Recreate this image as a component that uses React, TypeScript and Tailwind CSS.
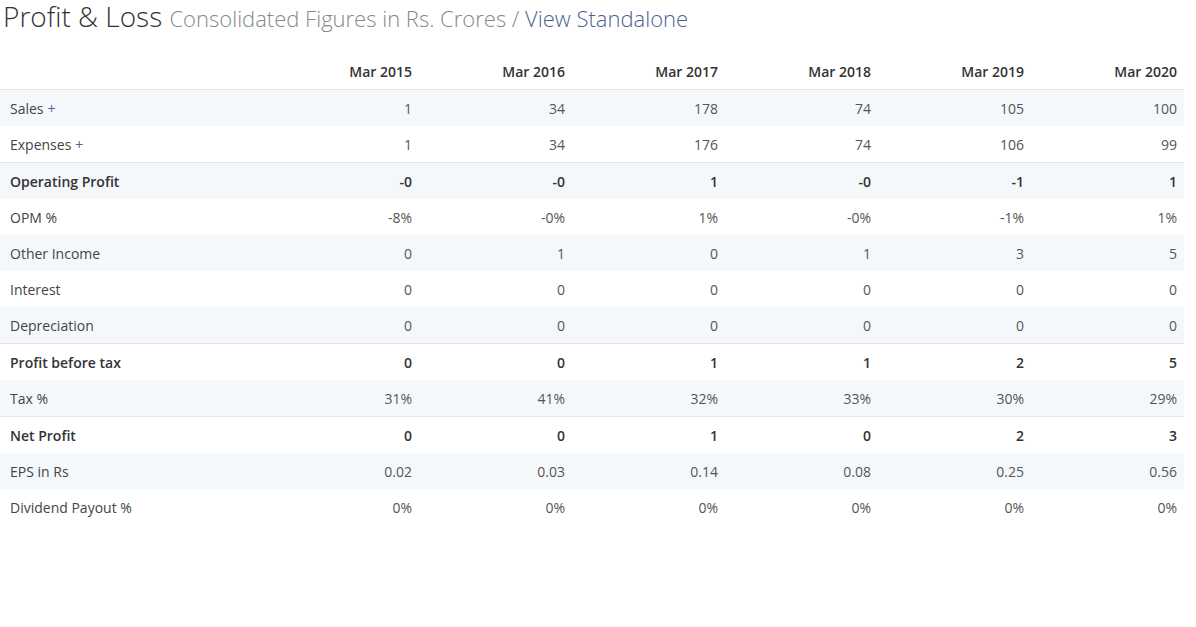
import React from "react";

type Row = { label: string; values: string[]; bold?: boolean; plus?: boolean; borderTop?: boolean };

const years = ["Mar 2015", "Mar 2016", "Mar 2017", "Mar 2018", "Mar 2019", "Mar 2020"];

const rows: Row[] = [
  { label: "Sales", plus: true, values: ["1", "34", "178", "74", "105", "100"] },
  { label: "Expenses", plus: true, values: ["1", "34", "176", "74", "106", "99"] },
  { label: "Operating Profit", bold: true, borderTop: true, values: ["-0", "-0", "1", "-0", "-1", "1"] },
  { label: "OPM %", values: ["-8%", "-0%", "1%", "-0%", "-1%", "1%"] },
  { label: "Other Income", values: ["0", "1", "0", "1", "3", "5"] },
  { label: "Interest", values: ["0", "0", "0", "0", "0", "0"] },
  { label: "Depreciation", values: ["0", "0", "0", "0", "0", "0"] },
  { label: "Profit before tax", bold: true, borderTop: true, values: ["0", "0", "1", "1", "2", "5"] },
  { label: "Tax %", values: ["31%", "41%", "32%", "33%", "30%", "29%"] },
  { label: "Net Profit", bold: true, borderTop: true, values: ["0", "0", "1", "0", "2", "3"] },
  { label: "EPS in Rs", values: ["0.02", "0.03", "0.14", "0.08", "0.25", "0.56"] },
  { label: "Dividend Payout %", values: ["0%", "0%", "0%", "0%", "0%", "0%"] },
];

export default function App() {
  return (
    <div className="min-h-screen bg-white" style={{ fontFamily: '"Open Sans", "Noto Sans", sans-serif' }}>
      <div className="w-[1184px] pt-[1px]">
        <h2 className="pl-[3px] text-[28px] leading-[30px] font-light text-[#333]">
          Profit &amp; Loss{" "}
          <span className="text-[22px] text-[#888]">
            Consolidated Figures in Rs. Crores /{" "}
            <a className="text-[#4a6491]">View Standalone</a>
          </span>
        </h2>
        <table className="mt-[21px] w-[1184px] table-fixed border-separate border-spacing-0 text-[14px]">
          <colgroup>
            <col className="w-[266px]" />
            {years.map((y) => (
              <col key={y} className="w-[153px]" />
            ))}
          </colgroup>
          <thead>
            <tr>
              <th className="border-b border-[#e4e8ee] py-[7px] leading-[21px]" />
              {years.map((y) => (
                <th
                  key={y}
                  className="border-b border-[#e4e8ee] py-[7px] pr-[7px] text-right leading-[21px] font-semibold text-[#333]"
                >
                  {y}
                </th>
              ))}
            </tr>
          </thead>
          <tbody>
            {rows.map((r, i) => {
              const bg = i % 2 === 0 ? "bg-[#f5f8fb]" : "bg-white";
              const bt = r.borderTop ? "border-t border-[#e2e6ec]" : "";
              return (
                <tr key={r.label} className={bg}>
                  <td
                    className={`${bt} py-[7.5px] pl-[10px] text-left leading-[21px] ${
                      r.bold ? "font-semibold text-[#333]" : "text-[#444]"
                    }`}
                  >
                    {r.label}
                    {r.plus && <span className="ml-[4px] text-[#4a6491]">+</span>}
                  </td>
                  {r.values.map((v, j) => (
                    <td
                      key={j}
                      className={`${bt} py-[7.5px] pr-[7px] text-right leading-[21px] ${
                        r.bold ? "font-semibold text-[#333]" : "text-[#555]"
                      }`}
                    >
                      {v}
                    </td>
                  ))}
                </tr>
              );
            })}
          </tbody>
        </table>
      </div>
    </div>
  );
}
